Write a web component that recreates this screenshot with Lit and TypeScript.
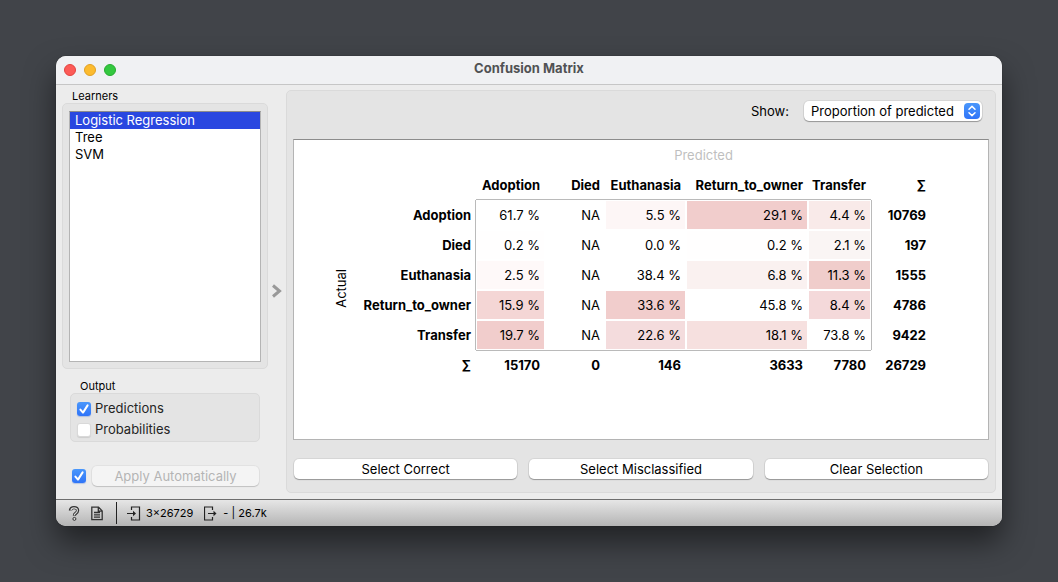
import { LitElement, html, css, svg } from "lit";
import { customElement, property, state } from "lit/decorators.js";
import { classMap } from "lit/directives/class-map.js";

const LEARNERS = ["Logistic Regression", "Tree", "SVM"];
const CLASSES = ["Adoption", "Died", "Euthanasia", "Return_to_owner", "Transfer"];

type Cell = { text: string; fill?: string };

const ROWS: { name: string; cells: Cell[]; total: string }[] = [
  {
    name: "Adoption",
    total: "10769",
    cells: [{ text: "61.7 %" }, { text: "NA" }, { text: "5.5 %", fill: "#fdf6f6" }, { text: "29.1 %", fill: "#f1cdcc" }, { text: "4.4 %", fill: "#f9eae9" }],
  },
  {
    name: "Died",
    total: "197",
    cells: [{ text: "0.2 %", fill: "#fffefe" }, { text: "NA" }, { text: "0.0 %" }, { text: "0.2 %", fill: "#fffefe" }, { text: "2.1 %", fill: "#faf5f4" }],
  },
  {
    name: "Euthanasia",
    total: "1555",
    cells: [{ text: "2.5 %", fill: "#fef9f9" }, { text: "NA" }, { text: "38.4 %" }, { text: "6.8 %", fill: "#faf1f0" }, { text: "11.3 %", fill: "#f0cdcb" }],
  },
  {
    name: "Return_to_owner",
    total: "4786",
    cells: [{ text: "15.9 %", fill: "#f4d6d5" }, { text: "NA" }, { text: "33.6 %", fill: "#f1cdcc" }, { text: "45.8 %" }, { text: "8.4 %", fill: "#f4d9da" }],
  },
  {
    name: "Transfer",
    total: "9422",
    cells: [{ text: "19.7 %", fill: "#f1cdcc" }, { text: "NA" }, { text: "22.6 %", fill: "#f4dcdd" }, { text: "18.1 %", fill: "#f6e0df" }, { text: "73.8 %" }],
  },
];
const TOTALS = ["15170", "0", "146", "3633", "7780", "26729"];

@customElement("confusion-table")
export class ConfusionTable extends LitElement {
  static styles = css`
    :host {
      display: block;
    }
    table {
      border-spacing: 0;
      table-layout: fixed;
      width: 604px;
      font-size: 13px;
      line-height: 16px;
      color: #000;
    }
    .c-actual { width: 28px; }
    .c-name { width: 121px; }
    .c-adoption { width: 69px; }
    .c-died { width: 60px; }
    .c-euthanasia { width: 81px; }
    .c-return { width: 122px; }
    .c-transfer { width: 63px; }
    .c-sum { width: 60px; }
    th,
    td {
      box-sizing: border-box;
      height: 30px;
      padding: 0 4px 0 0;
      border: 1px solid transparent;
      text-align: right;
      white-space: nowrap;
    }
    th {
      font-weight: 700;
    }
    .total {
      font-weight: 700;
    }
    .predicted {
      padding: 0;
      text-align: center;
      font-weight: 400;
      color: #bfbfbf;
    }
    .actual {
      padding: 0;
      text-align: center;
      font-weight: 400;
    }
    .actual span {
      display: inline-block;
      writing-mode: vertical-rl;
      transform: rotate(180deg);
    }
    .cell { border-color: #fff; }
    .top { box-shadow: 0 -1px #bababa; }
    .bottom { box-shadow: 0 1px #bababa; }
    .left { box-shadow: -1px 0 #bababa; }
    .right { box-shadow: 1px 0 #bababa; }
    .top.left { box-shadow: 0 -1px #bababa, -1px 0 #bababa; }
    .top.right { box-shadow: 0 -1px #bababa, 1px 0 #bababa; }
    .bottom.left { box-shadow: 0 1px #bababa, -1px 0 #bababa; }
    .bottom.right { box-shadow: 0 1px #bababa, 1px 0 #bababa; }
  `;

  private cell(c: Cell, row: number, col: number) {
    const classes = {
      cell: true,
      top: row === 0,
      bottom: row === ROWS.length - 1,
      left: col === 0,
      right: col === CLASSES.length - 1,
    };
    return html`<td class=${classMap(classes)} style=${`background-color:${c.fill ?? "#fff"}`}>${c.text}</td>`;
  }

  render() {
    return html`
      <table>
        <colgroup>
          <col class="c-actual" /><col class="c-name" /><col class="c-adoption" /><col class="c-died" />
          <col class="c-euthanasia" /><col class="c-return" /><col class="c-transfer" /><col class="c-sum" />
        </colgroup>
        <thead>
          <tr>
            <td colspan="2"></td>
            <th class="predicted" colspan="6">Predicted</th>
          </tr>
          <tr>
            <td colspan="2"></td>
            ${CLASSES.map((c) => html`<th scope="col">${c}</th>`)}
            <th scope="col">∑</th>
          </tr>
        </thead>
        <tbody>
          ${ROWS.map(
            (r, i) => html`<tr>
              ${i === 0 ? html`<th class="actual" rowspan="6"><span>Actual</span></th>` : ""}
              <th scope="row">${r.name}</th>
              ${r.cells.map((c, j) => this.cell(c, i, j))}
              <td class="total">${r.total}</td>
            </tr>`
          )}
          <tr>
            <th scope="row">∑</th>
            ${TOTALS.map((t) => html`<td class="total">${t}</td>`)}
          </tr>
        </tbody>
      </table>
    `;
  }
}

@customElement("check-box")
export class CheckBox extends LitElement {
  @property() label = "";
  @property({ type: Boolean }) checked = false;
  @property({ type: Boolean }) bare = false;

  static styles = css`
    :host {
      display: block;
    }
    label {
      display: flex;
      align-items: center;
      gap: 4px;
      font-size: 13px;
      line-height: 21px;
      color: #242424;
    }
    .box {
      display: grid;
      width: 14px;
      height: 14px;
    }
    .box > * {
      grid-area: 1 / 1;
    }
    input {
      appearance: none;
      width: 14px;
      height: 14px;
      margin: 0;
      border: 0;
      border-radius: 3px;
      background: #fff;
      box-shadow: inset 0 0 0 1px #00000026, 0 1px 1px #0000001a;
    }
    input:checked {
      background: linear-gradient(#4a97fb, #2f74f8);
      box-shadow: 0 1px 1px #0a50d040;
    }
    svg {
      display: none;
      width: 14px;
      height: 14px;
      fill: none;
      stroke: #fff;
      stroke-width: 2;
      stroke-linecap: round;
      stroke-linejoin: round;
      pointer-events: none;
    }
    input:checked + svg {
      display: block;
    }
  `;

  render() {
    return html`<label>
      <span class="box">
        <input
          type="checkbox"
          aria-label=${this.label}
          .checked=${this.checked}
          @change=${(e: Event) => (this.checked = (e.target as HTMLInputElement).checked)}
        />
        <svg viewBox="0 0 14 14"><path d="M3.4 7.6 6 10.6 10.6 3.4" /></svg>
      </span>
      ${this.bare ? "" : html`<span>${this.label}</span>`}
    </label>`;
  }
}

const helpIcon = svg`<path d="M3.4 4.6C3.6 2.7 5 1.7 7 1.7s3.6 1.1 3.6 2.9c0 1.4-.9 2.1-1.9 2.8-1 .7-1.3 1.2-1.3 2.4" stroke="#333" stroke-width="3.2"/>
  <path d="M3.9 4.6C4 2.7 5.2 1.9 7 1.9s3.4 1.1 3.4 2.7c0 1.4-.9 2.1-1.9 2.8-1 .7-1.3 1.2-1.1 1.9" stroke="#d8d8d8" stroke-width="1.2"/>
  <circle cx="7.4" cy="12.9" r="1.5" stroke="#333" fill="#d8d8d8"/>`;
const reportIcon = svg`<path d="M1.8 1.2h6.7l3.7 3.7v8.8H1.8z M8.3 1.2v3.9h3.9 M4 6.5h6 M4 8.8h6 M4 11.1h6" stroke="#333" stroke-width="1.3"/>`;
const inputIcon = svg`<path d="M4.5 4V1h8v13h-8v-3 M0 7.5h8" stroke="#222" stroke-width="1.2"/><path d="M6 4.8 9 7.5 6 10.2z" fill="#222"/>`;
const outputIcon = svg`<path d="M8.5 4V1h-8v13h8v-3 M4 7.5h8" stroke="#222" stroke-width="1.2"/><path d="M9.5 4.8 12.5 7.5 9.5 10.2z" fill="#222"/>`;

@customElement("app-root")
export class AppRoot extends LitElement {
  @state() private selected = 0;

  static styles = css`
    :host {
      display: flex;
      box-sizing: border-box;
      min-height: 100vh;
      padding: 56px;
      background: #414449;
      font-family: Inter, "Liberation Sans", sans-serif;
      font-size: 13px;
      line-height: 16px;
      color: #000;
    }
    button,
    select {
      font: inherit;
      color: inherit;
      border: 0;
      margin: 0;
      padding: 0;
    }
    .window {
      flex: 1;
      display: flex;
      flex-direction: column;
      min-width: 0;
      overflow: hidden;
      border-radius: 10px;
      background: #ececec;
      box-shadow: 0 0 1px #000000b0, 0 16px 30px #00000080;
    }
    .titlebar {
      display: grid;
      grid-template-columns: 1fr auto 1fr;
      align-items: center;
      height: 28px;
      padding: 0 8px;
      border-bottom: 1px solid #c6c6c6;
      background: #f0f1f3;
    }
    .lights {
      display: flex;
      gap: 8px;
    }
    .light {
      box-sizing: border-box;
      width: 12px;
      height: 12px;
      border-radius: 50%;
    }
    .close { background: #fc5b57; border: 1px solid #e2433f; }
    .minimize { background: #fcbb2e; border: 1px solid #e0a023; }
    .zoom { background: #34c83f; border: 1px solid #27ab30; }
    h1 {
      margin: 0 0 4px;
      font-size: 13px;
      line-height: 16px;
      font-weight: 700;
      color: #505254;
    }
    .body {
      flex: 1;
      display: flex;
    }
    .side {
      flex: none;
      display: flex;
      flex-direction: column;
      box-sizing: border-box;
      width: 212px;
      padding: 5px 0 13px 6px;
    }
    h2 {
      margin: 0;
      padding-left: 10px;
      font-size: 11px;
      line-height: 13px;
      font-weight: 400;
    }
    .group {
      box-sizing: border-box;
      border: 1px solid #dadada;
      border-radius: 5px;
      background: #e4e4e4;
    }
    .learners {
      flex: 1;
      display: flex;
      padding: 7px 6px 6px;
    }
    .list {
      flex: 1;
      margin: 0;
      padding: 0;
      list-style: none;
      border: 1px solid #b4b4b4;
      border-top-color: #8c8c8c;
      background: #fff;
    }
    .item {
      display: block;
      width: 100%;
      padding: 0 5px;
      line-height: 17px;
      text-align: left;
      background: none;
    }
    .item.on {
      background: #2947e0;
      color: #fff;
    }
    .options {
      padding: 11px 8px 0;
    }
    .output {
      padding: 4px 6px 1px;
    }
    .apply {
      display: flex;
      align-items: center;
      gap: 6px;
      padding: 24px 9px 0 10px;
    }
    .push {
      flex: 1;
      height: 20px;
      border-radius: 5px;
      background: #fff;
      box-shadow: 0 0 0 1px #0000000f, 0 1px 1px #0000004d;
    }
    .push:disabled {
      background: #f4f4f4;
      color: #b4b4b4;
      box-shadow: 0 0 0 1px #0000000a, 0 1px 1px #00000026;
    }
    .handle {
      flex: none;
      display: flex;
      align-items: center;
      justify-content: center;
      width: 18px;
    }
    .handle svg {
      width: 10px;
      height: 16px;
      fill: none;
      stroke: #999;
      stroke-width: 3;
    }
    .main {
      flex: 1;
      display: flex;
      flex-direction: column;
      min-width: 0;
      margin: 5px 6px 6px 0;
      padding: 10px 6px 13px;
    }
    .show {
      display: flex;
      align-items: center;
      justify-content: flex-end;
      gap: 15px;
      padding-right: 7px;
    }
    .picker {
      display: grid;
      align-items: center;
      width: 178px;
    }
    .picker > * {
      grid-area: 1 / 1;
    }
    select {
      appearance: none;
      height: 20px;
      padding: 0 24px 0 7px;
      border-radius: 5px;
      background: #fff;
      box-shadow: 0 0 0 1px #0000000f, 0 1px 1px #0000004d;
    }
    .arrows {
      justify-self: end;
      width: 16px;
      height: 16px;
      margin-right: 2px;
      border-radius: 4px;
      background: linear-gradient(#4a97fb, #2f74f8);
      fill: none;
      stroke: #fff;
      stroke-width: 1.5;
      stroke-linecap: round;
      stroke-linejoin: round;
      pointer-events: none;
    }
    .view {
      flex: 1;
      margin-top: 18px;
      padding-left: 33px;
      border: 1px solid #b4b4b4;
      border-top-color: #8c8c8c;
      background: #fff;
    }
    .actions {
      display: flex;
      gap: 12px;
      padding: 19px 1px 0;
    }
    .status {
      display: flex;
      align-items: center;
      height: 26px;
      padding: 0 11px;
      border-top: 1px solid #6e6e6e;
      background: linear-gradient(#e6e6e6, #b4b4b4);
      font-size: 11px;
    }
    .status svg {
      width: 14px;
      height: 15px;
      fill: none;
    }
    .tool {
      display: flex;
      margin-right: 9px;
      background: none;
    }
    .divider {
      width: 1px;
      height: 22px;
      margin: 0 10px 0 3px;
      background: #222;
    }
    .flow {
      display: flex;
      align-items: center;
      gap: 5px;
      margin-right: 11px;
    }
  `;

  render() {
    return html`
      <div class="window">
        <header class="titlebar">
          <div class="lights">
            <button class="light close" aria-label="Close"></button>
            <button class="light minimize" aria-label="Minimize"></button>
            <button class="light zoom" aria-label="Zoom"></button>
          </div>
          <h1>Confusion Matrix</h1>
        </header>
        <div class="body">
          <aside class="side">
            <h2>Learners</h2>
            <div class="group learners">
              <ul class="list">
                ${LEARNERS.map(
                  (name, i) => html`<li>
                    <button class=${classMap({ item: true, on: i === this.selected })} @click=${() => (this.selected = i)}>${name}</button>
                  </li>`
                )}
              </ul>
            </div>
            <div class="options">
              <h2>Output</h2>
              <div class="group output">
                <check-box label="Predictions" checked></check-box>
                <check-box label="Probabilities"></check-box>
              </div>
            </div>
            <div class="apply">
              <check-box label="Apply automatically" checked bare></check-box>
              <button class="push" disabled>Apply Automatically</button>
            </div>
          </aside>
          <div class="handle"><svg viewBox="0 0 10 16"><path d="M1 1.5 7.5 7 1 12.5" /></svg></div>
          <main class="group main">
            <div class="show">
              <label for="show">Show:</label>
              <div class="picker">
                <select id="show">
                  <option>Number of instances</option>
                  <option selected>Proportion of predicted</option>
                  <option>Proportion of actual</option>
                </select>
                <svg class="arrows" viewBox="0 0 16 16"><path d="M5 6.2 8 3.4l3 2.8M5 9.8l3 2.8 3-2.8" /></svg>
              </div>
            </div>
            <div class="view"><confusion-table></confusion-table></div>
            <div class="actions">
              <button class="push">Select Correct</button>
              <button class="push">Select Misclassified</button>
              <button class="push">Clear Selection</button>
            </div>
          </main>
        </div>
        <footer class="status">
          <button class="tool" aria-label="Help"><svg viewBox="0 0 14 15">${helpIcon}</svg></button>
          <button class="tool" aria-label="Report"><svg viewBox="0 0 14 15">${reportIcon}</svg></button>
          <span class="divider"></span>
          <span class="flow"><svg viewBox="0 0 14 15">${inputIcon}</svg>3×26729</span>
          <span class="flow"><svg viewBox="0 0 14 15">${outputIcon}</svg>- | 26.7k</span>
        </footer>
      </div>
    `;
  }
}
